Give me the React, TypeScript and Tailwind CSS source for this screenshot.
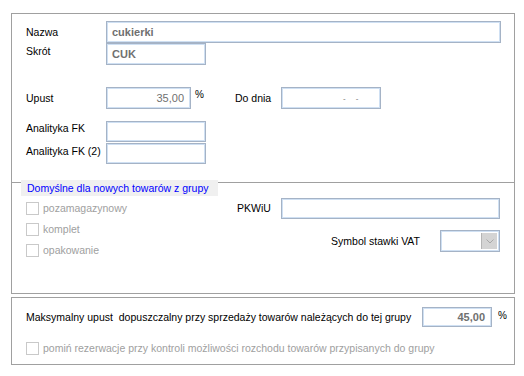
import React from 'react';

const inputCls =
  'border border-[#a5b3c6] shadow-[inset_0_0_0_1px_#cfe0f3] bg-white box-border';

const Check: React.FC<{ label: string }> = ({ label }) => (
  <div className="flex h-[13px] items-center">
    <div className="h-[13px] w-[13px] border border-[#c9c9c9] bg-white" />
    <span className="ml-[4px] text-[#a0a0a0]">{label}</span>
  </div>
);

const App: React.FC = () => {
  return (
    <div
      className="h-[376px] w-[524px] overflow-hidden bg-white pt-[13px] text-[10.5px] leading-[13px] text-black"
      style={{ fontFamily: '"Liberation Sans", Arial, sans-serif' }}>
      {/* górna ramka */}
      <div className="ml-[11px] h-[281px] w-[504px] border border-[#a0a0a0]">
        <div className="pl-[14px] pt-[7px]">
          <div className="flex h-[22px] items-center">
            <div className="w-[80px]">Nazwa</div>
            <div className={`${inputCls} flex h-[22px] w-[395px] items-center pl-[5px] text-[11px] font-bold text-[#707070]`}>
              cukierki
            </div>
          </div>
          <div className="flex h-[22px] items-center">
            <div className="w-[80px] -mt-[6px]">Skrót</div>
            <div className={`${inputCls} flex h-[22px] w-[100px] items-center pl-[5px] text-[11px] font-bold text-[#707070]`}>
              CUK
            </div>
          </div>

          <div className="mt-[22px] flex h-[22px] items-center">
            <div className="w-[80px]">Upust</div>
            <div className={`${inputCls} flex h-[22px] w-[85px] items-center justify-end pr-[6px] text-[11px] text-[#707070]`}>
              35,00
            </div>
            <div className="w-[44px] pl-[4px] -mt-[8px] text-[10px]">%</div>
            <div className="w-[46px]">Do dnia</div>
            <div className={`${inputCls} flex h-[22px] w-[100px] items-center pl-[61px] text-[8px] text-[#707070]`}>
              -<span className="ml-[10px]">-</span>
            </div>
          </div>

          <div className="mt-[12px] flex h-[21px] items-center">
            <div className="w-[80px] -mt-[6px]">Analityka FK</div>
            <div className={`${inputCls} h-[21px] w-[100px]`} />
          </div>
          <div className="mt-[1px] flex h-[21px] items-center">
            <div className="w-[80px] -mt-[4px]">Analityka FK (2)</div>
            <div className={`${inputCls} h-[21px] w-[100px]`} />
          </div>
        </div>

        {/* grupa: domyślne */}
        <div className="mt-[18px] border-t border-[#a0a0a0]">
          <div className="-mt-[3px] ml-[9px] h-[16px] w-[197px] bg-[#f0f0f0] pl-[6px] leading-[16px] text-[#0000ff]">
            Domyślne dla nowych towarów z grupy
          </div>
          <div className="flex pl-[14px]">
            <div className="flex w-[211px] flex-col gap-[8px] pt-[6px]">
              <Check label="pozamagazynowy" />
              <Check label="komplet" />
              <Check label="opakowanie" />
            </div>
            <div className="w-[263px] pt-[2px]">
              <div className="flex h-[21px] items-center">
                <div className="w-[44px]">PKWiU</div>
                <div className={`${inputCls} h-[21px] w-[220px]`} />
              </div>
              <div className="mt-[11px] flex h-[22px] items-center justify-end">
                <div className="mr-[20px]">Symbol stawki VAT</div>
                <div className={`${inputCls} flex h-[22px] w-[60px] justify-end p-[2px]`}>
                  <div className="flex h-full w-[16px] items-center justify-center border-l border-[#b5b5b5] bg-[#d4d4d4]">
                    <svg width="8" height="5" viewBox="0 0 8 5">
                      <path d="M0.5 0.5 L4 4 L7.5 0.5" fill="none" stroke="#a8a8a8" strokeWidth="1" />
                    </svg>
                  </div>
                </div>
              </div>
            </div>
          </div>
        </div>
      </div>

      {/* dolna ramka */}
      <div className="ml-[11px] mt-[3px] h-[68px] w-[504px] border border-[#a0a0a0] pl-[14px] pt-[9px]">
        <div className="flex h-[20px] items-center">
          <div className="w-[396px] whitespace-pre">
            Maksymalny upust  dopuszczalny przy sprzedaży towarów należących do tej grupy
          </div>
          <div className={`${inputCls} flex h-[20px] w-[70px] items-center justify-end pr-[6px] text-[11px] font-bold text-[#707070]`}>
            45,00
          </div>
          <div className="ml-[6px] -mt-[4px] text-[10px]">%</div>
        </div>
        <div className="mt-[15px]">
          <Check label="pomiń rezerwacje przy kontroli możliwości rozchodu towarów przypisanych do grupy" />
        </div>
      </div>
    </div>
  );
};

export default App;
